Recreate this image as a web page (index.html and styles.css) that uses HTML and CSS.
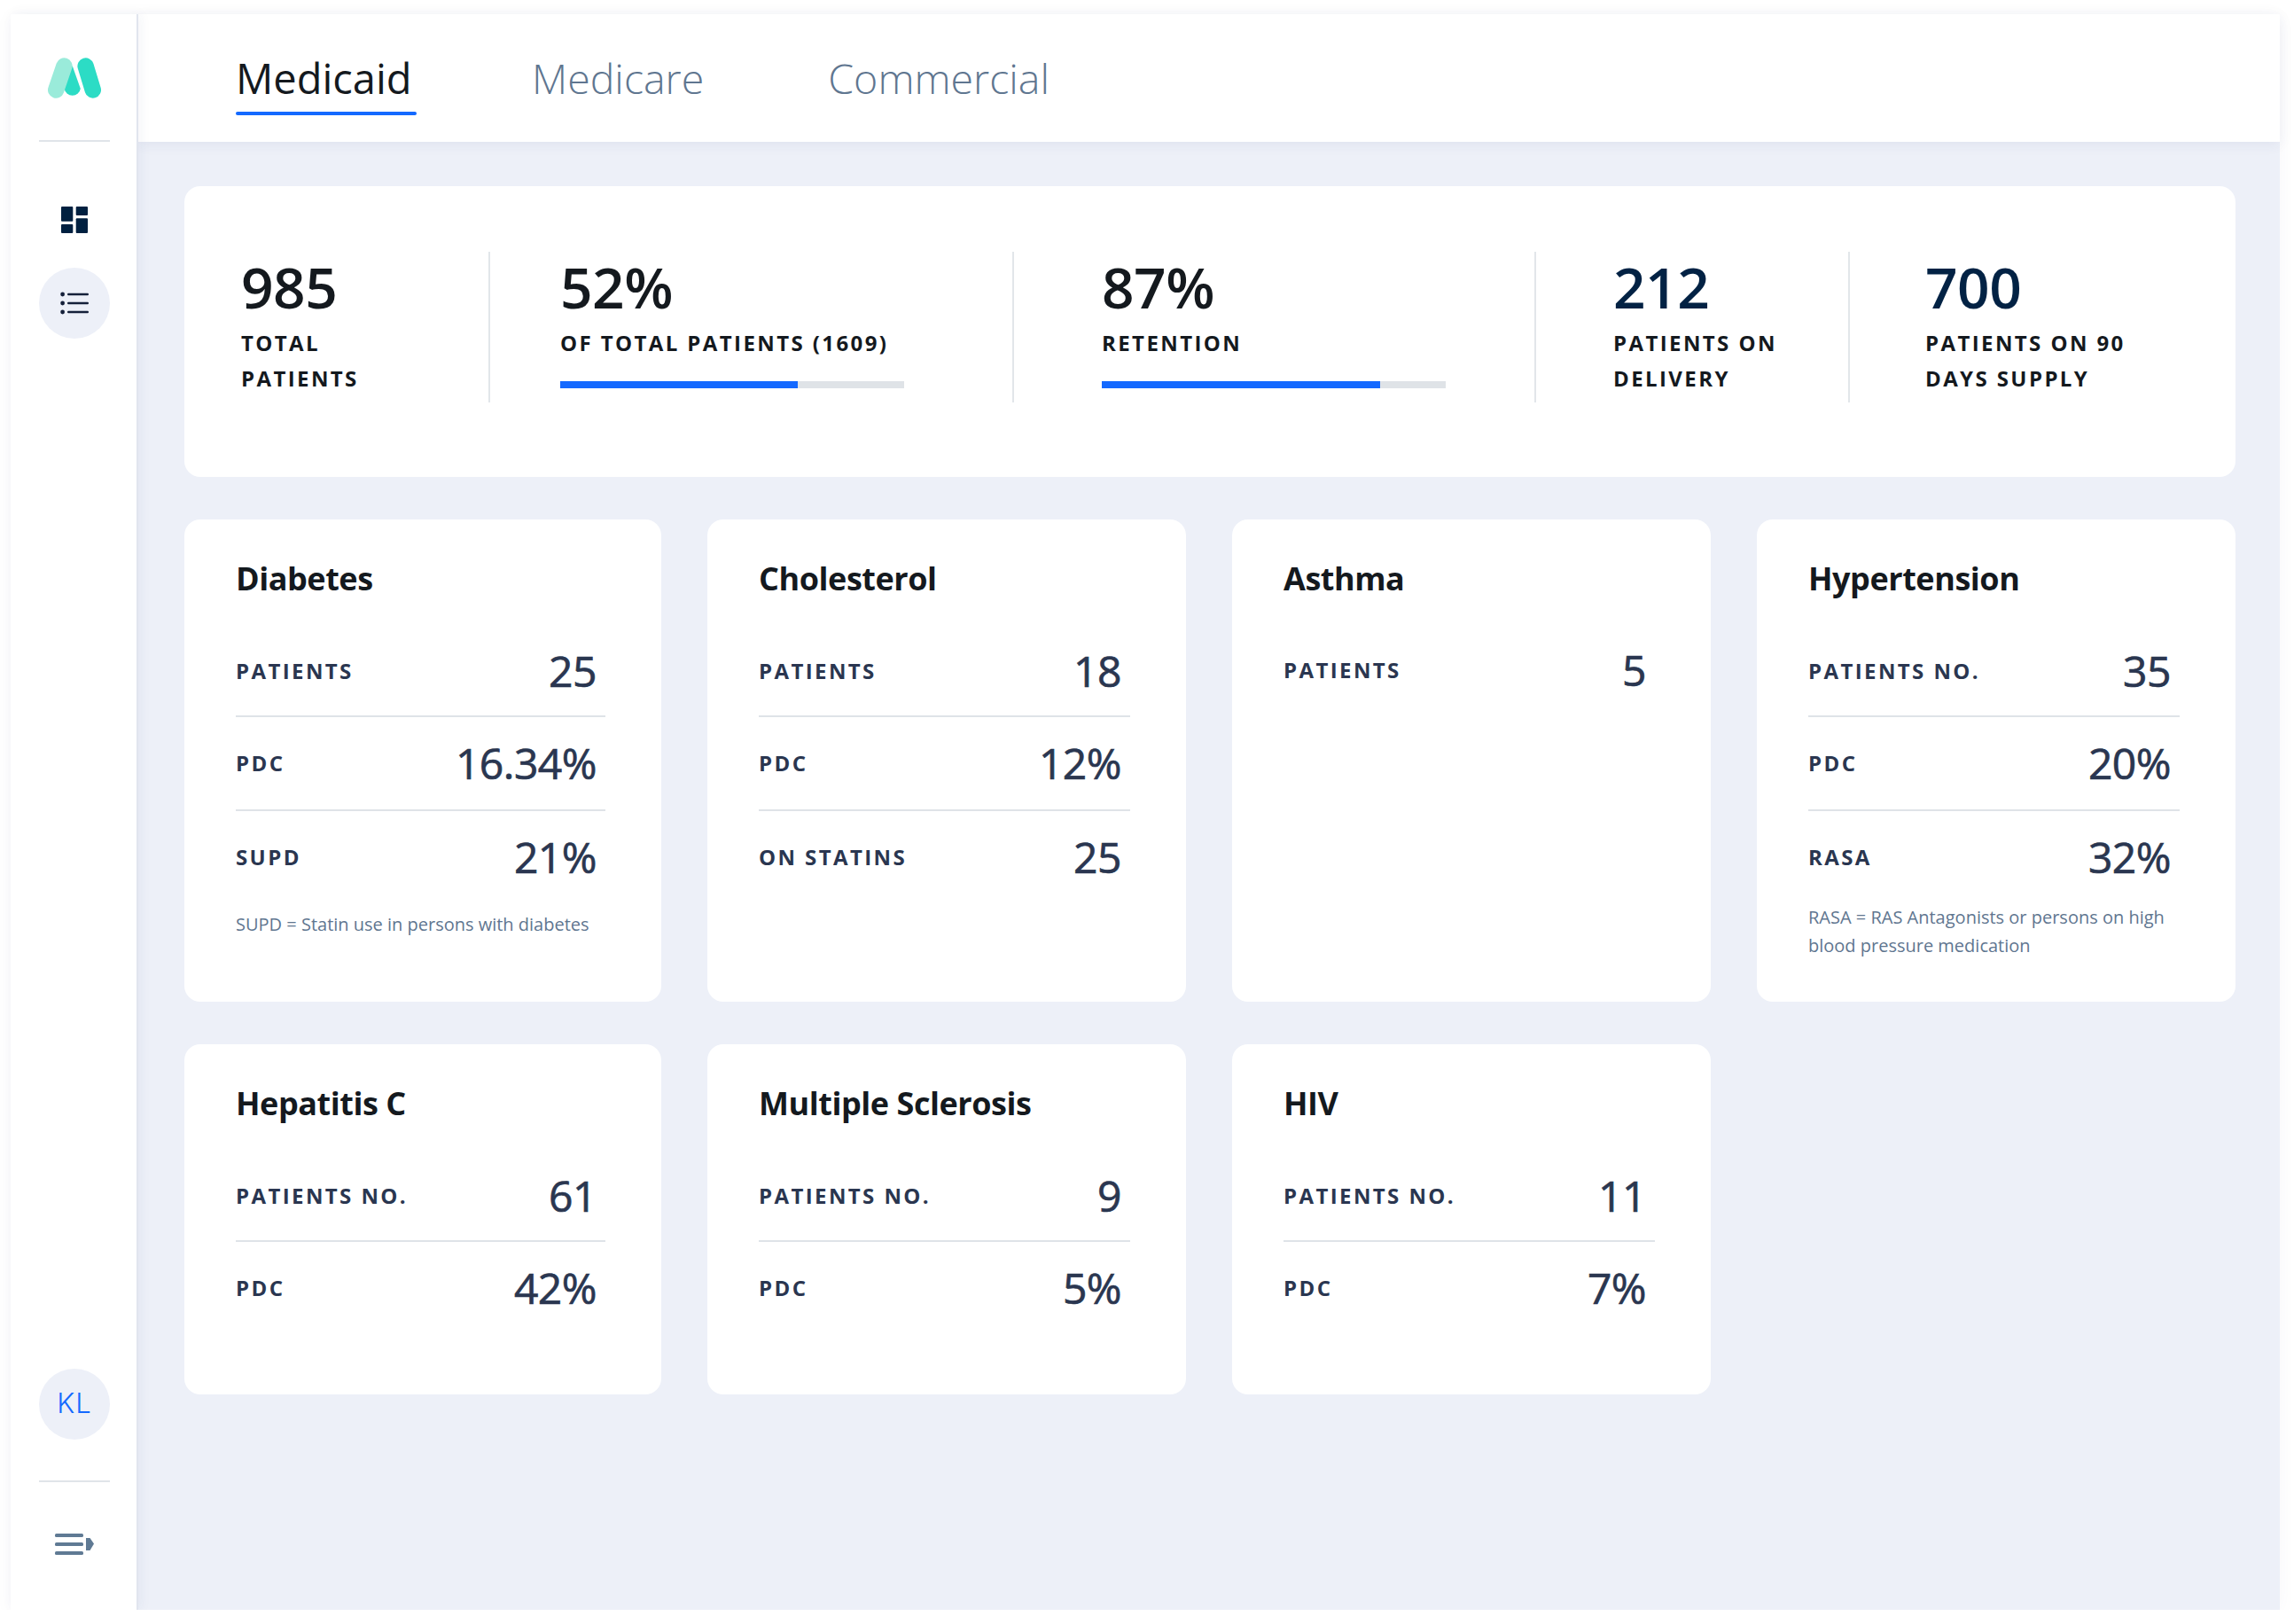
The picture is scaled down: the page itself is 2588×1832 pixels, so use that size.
FILE: index.html
```html
<!DOCTYPE HTML>
<html>
<head>
<meta charset="utf-8">
<title>Patients</title>
<link rel="stylesheet" href="styles.css">
</head>
<body>
<div class="app">
    <nav class="sidebar">
        <div class="logo">
            <svg width="60" height="47" viewBox="54 64 60 47">
                <path d="M81.6 74 L90.8 100 A9.2 9.2 0 0 1 72.6 100 Z" fill="#2cdcc5"/>
                <line x1="72.4" y1="74.5" x2="63.2" y2="101.5" stroke="#9aebda" stroke-width="18.4" stroke-linecap="round"/>
                <line x1="96.6" y1="74.5" x2="104.8" y2="101.5" stroke="#2cdcc5" stroke-width="18.4" stroke-linecap="round"/>
            </svg>
        </div>
        <hr class="side-line">
        <div class="side-icon first">
            <svg width="30" height="30" viewBox="0 0 30 30" fill="#002040">
                <rect width="13.3" height="16.7" rx="1"/>
                <rect x="16.7" width="13.3" height="10" rx="1"/>
                <rect y="20" width="13.3" height="10" rx="1"/>
                <rect x="16.7" y="13.3" width="13.3" height="16.7" rx="1"/>
            </svg>
        </div>
        <div class="side-icon active">
            <svg width="32" height="26" viewBox="0 0 32 26" fill="#15203a">
                <circle cx="2.6" cy="3" r="2.4"/>
                <circle cx="2.6" cy="13" r="2.4"/>
                <circle cx="2.6" cy="23" r="2.4"/>
                <rect x="8" y="1.8" width="24" height="2.4" rx="1.2"/>
                <rect x="8" y="11.8" width="24" height="2.4" rx="1.2"/>
                <rect x="8" y="21.8" width="24" height="2.4" rx="1.2"/>
            </svg>
        </div>
        <div class="side-bottom">
            <div class="avatar">KL</div>
            <hr class="side-line">
            <div class="menu-icon">
                <svg width="44" height="26" viewBox="0 0 44 26" fill="#5f7a94">
                    <rect y="1" width="32" height="4" rx="1.6"/>
                    <rect y="11" width="32" height="4" rx="1.6"/>
                    <rect y="21" width="32" height="4" rx="1.6"/>
                    <path d="M35 6 L39.5 6 L44 12.5 L39.5 20 L35 20 Z"/>
                </svg>
            </div>
        </div>
    </nav>
    <div class="main">
        <header class="tabs">
            <a class="tab selected">Medicaid</a>
            <a class="tab">Medicare</a>
            <a class="tab">Commercial</a>
        </header>
        <div class="content">
            <section class="summary">
                <div class="stat">
                    <div class="num">985</div>
                    <div class="stat-label">TOTAL<br>PATIENTS</div>
                </div>
                <div class="stat">
                    <div class="num">52%</div>
                    <div class="stat-label">OF TOTAL PATIENTS (1609)</div>
                    <div class="bar"><div class="bar-fill" style="width: 69%"></div></div>
                </div>
                <div class="stat">
                    <div class="num">87%</div>
                    <div class="stat-label">RETENTION</div>
                    <div class="bar"><div class="bar-fill" style="width: 81%"></div></div>
                </div>
                <div class="stat">
                    <div class="num navy">212</div>
                    <div class="stat-label">PATIENTS ON<br>DELIVERY</div>
                </div>
                <div class="stat">
                    <div class="num navy">700</div>
                    <div class="stat-label">PATIENTS ON 90<br>DAYS SUPPLY</div>
                </div>
            </section>
            <section class="cards">
                <div class="card">
                    <h3>Diabetes</h3>
                    <div class="row"><span class="key">PATIENTS</span><span class="val">25</span></div>
                    <div class="row"><span class="key">PDC</span><span class="val">16.34%</span></div>
                    <div class="row last"><span class="key">SUPD</span><span class="val">21%</span></div>
                    <p class="note">SUPD = Statin use in persons with diabetes</p>
                </div>
                <div class="card">
                    <h3>Cholesterol</h3>
                    <div class="row"><span class="key">PATIENTS</span><span class="val">18</span></div>
                    <div class="row"><span class="key">PDC</span><span class="val">12%</span></div>
                    <div class="row last"><span class="key">ON STATINS</span><span class="val">25</span></div>
                </div>
                <div class="card">
                    <h3>Asthma</h3>
                    <div class="row last"><span class="key">PATIENTS</span><span class="val">5</span></div>
                </div>
                <div class="card">
                    <h3>Hypertension</h3>
                    <div class="row"><span class="key">PATIENTS NO.</span><span class="val">35</span></div>
                    <div class="row"><span class="key">PDC</span><span class="val">20%</span></div>
                    <div class="row last"><span class="key">RASA</span><span class="val">32%</span></div>
                    <p class="note two-lines">RASA = RAS Antagonists or persons on high blood pressure medication</p>
                </div>
                <div class="card">
                    <h3>Hepatitis C</h3>
                    <div class="row"><span class="key">PATIENTS NO.</span><span class="val">61</span></div>
                    <div class="row last"><span class="key">PDC</span><span class="val">42%</span></div>
                </div>
                <div class="card">
                    <h3>Multiple Sclerosis</h3>
                    <div class="row"><span class="key">PATIENTS NO.</span><span class="val">9</span></div>
                    <div class="row last"><span class="key">PDC</span><span class="val">5%</span></div>
                </div>
                <div class="card">
                    <h3>HIV</h3>
                    <div class="row"><span class="key">PATIENTS NO.</span><span class="val">11</span></div>
                    <div class="row last"><span class="key">PDC</span><span class="val">7%</span></div>
                </div>
            </section>
        </div>
    </div>
</div>
</body>
</html>
```
FILE: styles.css
```css
* {
    box-sizing: border-box;
}
body {
    margin: 0;
    background: #fff;
    font-family: "Open Sans", sans-serif;
}
.app {
    display: flex;
    width: 2560px;
    height: 1800px;
    margin: 16px 0 0 12px;
    box-shadow: 0 2px 20px rgba(40, 60, 110, 0.04);
}

/* sidebar */
.sidebar {
    position: relative;
    z-index: 2;
    display: flex;
    flex-direction: column;
    align-items: center;
    flex: 0 0 144px;
    padding-left: 2px;
    background: #fff;
    border-right: 2px solid #e1e5ee;
    box-shadow: 3px 0 12px rgba(40, 60, 110, 0.05);
}
.logo {
    height: 142px;
    padding-top: 48px;
}
.logo svg,
.side-icon svg,
.menu-icon svg {
    display: block;
}
.side-line {
    width: 80px;
    height: 2px;
    margin: 0;
    border: 0;
    background: #e0e4e9;
}
.side-icon {
    display: flex;
    align-items: center;
    justify-content: center;
    width: 80px;
    height: 80px;
}
.side-icon.first {
    margin-top: 48px;
}
.side-icon.active {
    margin-top: 14px;
    border-radius: 50%;
    background: #edf0f8;
}
.side-bottom {
    display: flex;
    flex-direction: column;
    align-items: center;
    margin-top: auto;
}
.avatar {
    width: 80px;
    height: 80px;
    margin-bottom: 46px;
    border-radius: 50%;
    background: #edf0f8;
    color: #1469ff;
    font-family: Inter, sans-serif;
    font-size: 31px;
    font-weight: 300;
    letter-spacing: 1px;
    line-height: 78px;
    text-align: center;
}
.menu-icon {
    height: 144px;
    padding-top: 57px;
}

/* header */
.main {
    display: flex;
    flex-direction: column;
    flex: 1;
    min-width: 0;
    background: #edf0f8;
}
.tabs {
    position: relative;
    z-index: 1;
    display: flex;
    height: 144px;
    padding-left: 110px;
    background: #fff;
    box-shadow: 0 3px 14px rgba(40, 60, 110, 0.07);
}
.tab {
    margin-right: 140px;
    padding-top: 39px;
    color: #5f7690;
    font-size: 46.5px;
    font-weight: 300;
    line-height: 66px;
}
.tab.selected {
    width: 204px;
    margin-right: 130px;
    color: #14191e;
    font-size: 47px;
    font-weight: 400;
}
.tab.selected::after {
    content: "";
    display: block;
    height: 4px;
    margin-top: 5px;
    border-radius: 2px;
    background: #1469ff;
}

/* content */
.content {
    padding: 50px 50px 0 52px;
}
.summary {
    display: grid;
    grid-template-columns: 345px 591px 589px 354px 1fr;
    height: 328px;
    padding-top: 74px;
    border-radius: 18px;
    background: #fff;
}
.stat {
    height: 170px;
    padding-left: 64px;
    border-right: 2px solid #e2e6ea;
}
.stat:nth-child(2) {
    padding-left: 79px;
}
.stat:nth-child(3) {
    padding-left: 99px;
}
.stat:nth-child(4) {
    padding-left: 87px;
}
.stat:nth-child(5) {
    padding-left: 85px;
    border-right: 0;
}
.num {
    color: #14191e;
    font-size: 64px;
    font-weight: 600;
    letter-spacing: -0.5px;
    line-height: 80px;
}
.num.navy {
    color: #022244;
}
.stat-label {
    margin-top: 3px;
    color: #14191e;
    font-size: 24px;
    font-weight: 700;
    letter-spacing: 2.4px;
    line-height: 40px;
}
.bar {
    width: 388px;
    height: 8px;
    margin-top: 23px;
    background: #dfe3e7;
}
.bar-fill {
    height: 100%;
    background: #1469ff;
}

.cards {
    display: grid;
    grid-template-columns: 538px 540px 540px 540px;
    grid-template-rows: 544px 395px;
    gap: 48px 52px;
    margin-top: 48px;
}
.card {
    padding: 43px 63px 0 58px;
    border-radius: 18px;
    background: #fff;
}
.card h3 {
    margin: 0 0 26px;
    color: #14191e;
    font-size: 36px;
    font-weight: 700;
    letter-spacing: -0.45px;
    line-height: 48px;
}
.row {
    display: flex;
    align-items: center;
    justify-content: space-between;
    height: 106px;
    padding: 2px 10px 0 0;
    border-bottom: 2px solid #dfe3e8;
}
.row + .row {
    padding: 0 10px 2px 0;
}
.row.last {
    padding-bottom: 4px;
    border-bottom: 0;
}
.key {
    color: #2a3650;
    font-size: 24px;
    font-weight: 700;
    letter-spacing: 2.4px;
}
.val {
    color: #2a3650;
    font-size: 48px;
    font-weight: 400;
    letter-spacing: -0.5px;
    -webkit-text-stroke: 0.7px #2a3650;
}
.note {
    margin: 6px 0 0;
    color: #5f7690;
    font-size: 20px;
    line-height: 32px;
}
.note.two-lines {
    margin-top: -2px;
}
```
